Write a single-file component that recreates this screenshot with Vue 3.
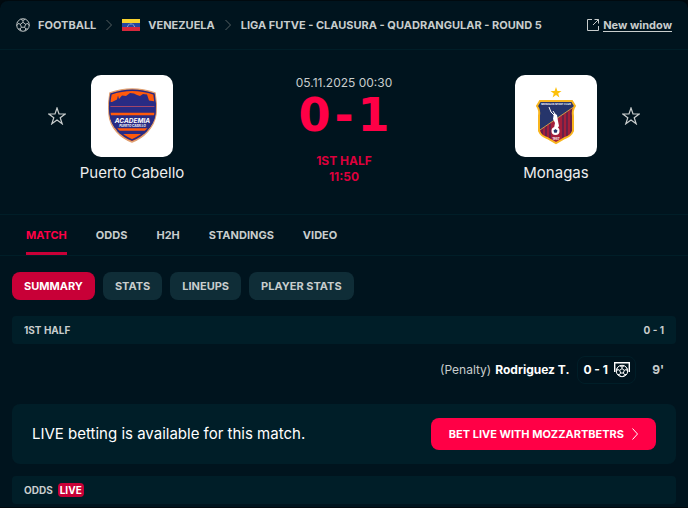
<template>
  <main class="page">
    <header class="header">
      <nav class="breadcrumb" aria-label="Breadcrumb">
        <a href="#" class="crumb">
          <svg class="ball" viewBox="0 0 20 20" aria-hidden="true">
            <circle cx="10" cy="10" r="9" />
            <path d="M10 6.2 13.7 8.9 12.3 13.2H7.7L6.3 8.9Z" />
            <path d="M10 6.2V3.4M13.7 8.9l2.8-1M12.3 13.2l1.7 2.4M7.7 13.2 6 15.6M6.3 8.9l-2.8-1" />
            <path d="M6.6 1.8 10 3.4l3.4-1.6M18 6.3l-1.5 1.6 2.4 3M16.8 15.8l-2.8-.2-1.5 3M7.5 18.6 6 15.6l-2.8.2M1.1 10.9l2.4-3L2 6.3" />
          </svg>
          FOOTBALL
        </a>
        <svg class="chevron" viewBox="0 0 6 12" aria-hidden="true"><path d="M.5 1 5.5 6 .5 11" /></svg>
        <a href="#" class="crumb">
          <svg class="flag" viewBox="0 0 18 12" aria-hidden="true">
            <rect width="18" height="4" fill="#f8d22e" />
            <rect y="4" width="18" height="4" fill="#2546a0" />
            <rect y="8" width="18" height="4" fill="#d6283c" />
            <path d="M5.5 7.8C6.2 4 11.8 4 12.5 7.8" fill="none" stroke="#b9c3df" stroke-width="1" stroke-dasharray="1.2 .5" />
          </svg>
          VENEZUELA
        </a>
        <svg class="chevron" viewBox="0 0 6 12" aria-hidden="true"><path d="M.5 1 5.5 6 .5 11" /></svg>
        <a href="#" class="crumb">LIGA FUTVE - CLAUSURA - QUADRANGULAR - ROUND 5</a>
      </nav>
      <a href="#" class="new-window">
        <svg viewBox="0 0 12 12" aria-hidden="true">
          <path d="M5 .5H.5v11h11V7M7.5.5h4v4M11.5.5 6 6" />
        </svg>
        <span>New window</span>
      </a>
    </header>

    <section class="duel">
      <div class="participant">
        <button class="favourite" aria-label="Add Puerto Cabello to favourites">
          <svg viewBox="0 0 18 18"><path :d="star" /></svg>
        </button>
        <a href="#" class="team">
          <span class="logo">
            <svg viewBox="0 0 82 82" aria-hidden="true">
              <defs>
                <clipPath id="shield"><path d="M19 18Q41 10 64 18Q66 29 65 39C63 53 52 63 41 67C30 63 19 53 18 39Q17 28 19 18Z" /></clipPath>
              </defs>
              <g clip-path="url(#shield)">
                <rect width="82" height="82" fill="#292b84" />
                <path d="M16 10H68V27L58 25.500 56 19.500 52 19 49 21 46 20 43 18.500 39 18 35 21 31 20.500 28 24 27 20.500 26 24.500 21 27H16Z" fill="#ff5a0b" />
                <path d="M16 31.500H68" stroke="#a2466a" />
                <path d="M16 39H68M16 54.500H68" stroke="#ff5a0b" stroke-width="2.500" />
                <path d="M16 59H68V70H16Z" fill="#ff5a0b" />
              </g>
              <path d="M19 18Q41 10 64 18Q66 29 65 39C63 53 52 63 41 67C30 63 19 53 18 39Q17 28 19 18Z" fill="none" stroke="#e1a071" stroke-width="1.500" />
              <path d="M20 19Q41 11.500 63 19Q65 29 64 39C62 52 51 61 41 65C31 61 21 52 19 39Q18 28 20 19Z" fill="none" stroke="#292b84" stroke-width="1.500" />
              <text x="41.500" y="47.500" font-size="6.500" font-style="italic" font-weight="700" text-anchor="middle" fill="#fff">ACADEMIA</text>
              <text x="41.500" y="51.500" font-size="3" font-style="italic" font-weight="700" text-anchor="middle" fill="#fff">PUERTO CABELLO</text>
            </svg>
          </span>
          <span class="team-name">Puerto Cabello</span>
        </a>
      </div>

      <div class="result">
        <time class="start-time">05.11.2025 00:30</time>
        <div class="score"><span>0</span><span>-</span><span>1</span></div>
        <div class="status">1ST HALF<br />11:50</div>
      </div>

      <div class="participant away">
        <button class="favourite" aria-label="Add Monagas to favourites">
          <svg viewBox="0 0 18 18"><path :d="star" /></svg>
        </button>
        <a href="#" class="team">
          <span class="logo">
            <svg viewBox="0 0 82 82" aria-hidden="true">
              <defs>
                <clipPath id="crest"><path d="M25 26H57L60 31Q57 35 58 41V56Q56 61 50 63L41 68 32 63Q26 61 24 56V41Q25 35 22 31Z" /></clipPath>
              </defs>
              <path d="m41 12 1.400 3.900h4.100L43.200 18.400l1.200 4L41 20l-3.400 2.400 1.200-4L35.500 15.900h4.100Z" fill="#fdc10d" />
              <g clip-path="url(#crest)">
                <rect width="82" height="82" fill="#26356b" />
                <path d="M60 31V70H22V57Z" fill="#a51f3b" />
                <path d="M27 54V70M31 51V70M35 48V70M48 40V70M52 37V70M56 34V70" stroke="#55244e" stroke-width="1.500" />
                <path d="M22 57 60 31" stroke="#c59a4d" />
              </g>
              <path d="M25 26H57L60 31Q57 35 58 41V56Q56 61 50 63L41 68 32 63Q26 61 24 56V41Q25 35 22 31Z" fill="none" stroke="#f8b51e" stroke-width="2" />
              <path d="M34 32 36 37 40 41M38 36l2 3" fill="none" stroke="#fff" />
              <path d="m39 38 3 2 1 6 1 5-2 3-3-1 1-5-2-4Z" fill="#fff" />
              <circle cx="40.500" cy="56" r="4" fill="#fff" />
              <path d="m40.500 54 2 1.500-.8 2.300h-2.400l-.8-2.300Z" fill="#26356b" />
              <text x="41" y="30" font-size="2.500" font-weight="700" text-anchor="middle" fill="#fff">MONAGAS SPORT CLUB</text>
              <text x="41" y="64.500" font-size="3" font-weight="700" text-anchor="middle" fill="#fff">1987</text>
            </svg>
          </span>
          <span class="team-name">Monagas</span>
        </a>
      </div>
    </section>

    <nav class="tabs" aria-label="Match sections">
      <a v-for="tab in tabs" :key="tab" href="#" :class="{ active: tab === activeTab }" @click.prevent="activeTab = tab">{{ tab }}</a>
    </nav>

    <div class="filters">
      <button v-for="item in filters" :key="item" :class="{ active: item === activeFilter }" @click="activeFilter = item">{{ item }}</button>
    </div>

    <div class="content">
      <div class="section-bar">
        <span>1ST HALF</span>
        <span>0 - 1</span>
      </div>

      <div class="incident">
        <span class="note">(Penalty)</span>
        <a href="#" class="player">Rodriguez T.</a>
        <div class="incident-score">
          <span>0 - 1</span>
          <svg viewBox="0 0 16 16" aria-hidden="true">
            <path d="M.7 10V.7H15.300V10" stroke-width="1.400" />
            <circle cx="8" cy="9" r="5.700" />
            <path d="M8 6.600 10.300 8.300 9.400 11H6.600L5.700 8.300ZM8 6.600V5M10.300 8.300l2-.8M9.400 11l1.200 1.600M6.600 11l-1.200 1.600M5.700 8.300l-2-.8M5.800 3.800 8 5l2.200-1.200M13 6.300l-.7 1.200 1.300 2M12.500 12.600h-1.900l-1 1.800M6.400 14.400l-1-1.800H3.500M2.400 9.500l1.300-2L3 6.300" />
          </svg>
        </div>
        <span class="minute">9'</span>
      </div>

      <div class="betting">
        <p>LIVE betting is available for this match.</p>
        <button class="bet-button">
          BET LIVE WITH MOZZARTBETRS
          <svg viewBox="0 0 6 12" aria-hidden="true"><path d="M.5 .5 5.500 6 .5 11.500" /></svg>
        </button>
      </div>

      <div class="section-bar odds">
        <span>ODDS</span>
        <span class="live">LIVE</span>
      </div>
    </div>
  </main>
</template>

<script setup>
import { ref } from 'vue';

const tabs = ['MATCH', 'ODDS', 'H2H', 'STANDINGS', 'VIDEO'];
const filters = ['SUMMARY', 'STATS', 'LINEUPS', 'PLAYER STATS'];
const activeTab = ref('MATCH');
const activeFilter = ref('SUMMARY');

const star = 'M9 1 11 7H17.200L12.200 10.700 14.200 16.800 9 13 3.800 16.800 5.800 10.700 .8 7H7Z';
</script>

<style>
body {
  margin: 0;
  background: #010a0f;
}
</style>

<style scoped>
* {
  box-sizing: border-box;
}

.page {
  background: #00141e;
  border-radius: 8px 8px 0 0;
  border-top: 1px solid #010a0f;
  padding-bottom: 3px;
  color: #c8cdcd;
  font-family: Inter, "Liberation Sans", sans-serif;
  font-size: 12px;
  line-height: 16px;
}

a {
  color: inherit;
  text-decoration: none;
}

button {
  border: none;
  background: none;
  padding: 0;
  color: inherit;
  font: inherit;
  cursor: pointer;
}

svg {
  display: block;
  flex: none;
}

.header {
  display: flex;
  align-items: center;
  justify-content: space-between;
  height: 49px;
  padding: 0 16px;
  border-bottom: 1px solid #001e28;
}

.breadcrumb {
  display: flex;
  align-items: center;
  gap: 10px;
  font-size: 11px;
  font-weight: 700;
  white-space: nowrap;
}

.crumb {
  display: flex;
  align-items: center;
  gap: 8px;
}

.ball {
  width: 14px;
  height: 14px;
  fill: none;
  stroke: currentColor;
  stroke-width: 1.3;
}

.flag {
  width: 18px;
  height: 12px;
}

.chevron {
  width: 6px;
  height: 12px;
  fill: none;
  stroke: #555e61;
}

.new-window {
  display: flex;
  align-items: center;
  gap: 4px;
  font-size: 11px;
  font-weight: 700;
}

.new-window span {
  border-bottom: 1px solid currentColor;
  line-height: 12px;
}

.new-window svg {
  width: 12px;
  height: 12px;
  fill: none;
  stroke: currentColor;
}

.duel {
  display: flex;
  justify-content: space-between;
  padding: 25px 48px 29px;
  border-bottom: 1px solid #001e28;
}

.participant {
  display: flex;
  align-items: flex-start;
  gap: 14px;
}

.away {
  flex-direction: row-reverse;
}

.favourite {
  margin-top: 32px;
}

.favourite svg {
  width: 18px;
  height: 18px;
  fill: none;
  stroke: #c8cdcd;
  stroke-width: 1.2;
}

.team {
  display: flex;
  flex-direction: column;
  align-items: center;
  gap: 4px;
  width: 104px;
}

.logo {
  overflow: hidden;
  width: 82px;
  height: 82px;
  border-radius: 10px;
  background: #fff;
}

.team-name {
  color: #eeeeee;
  font-size: 15px;
  line-height: 24px;
  white-space: nowrap;
}

.result {
  text-align: center;
  color: #ff0046;
}

.start-time {
  display: block;
  color: #c8cdcd;
}

.score {
  display: flex;
  justify-content: center;
  gap: 4px;
  font-family: "DejaVu Sans", sans-serif;
  font-size: 46px;
  font-weight: 700;
  line-height: 48px;
}

.status {
  margin-top: 14px;
  color: #dc003c;
  font-weight: 700;
}

.tabs {
  display: flex;
  gap: 29px;
  height: 41px;
  padding: 0 26px;
  border-bottom: 1px solid #001e28;
  font-size: 11px;
  font-weight: 700;
}

.tabs a {
  padding-top: 12px;
}

.tabs .active {
  border-bottom: 3px solid #c80037;
  border-radius: 2px 2px 0 0;
  color: #ff0046;
}

.filters {
  display: flex;
  gap: 8px;
  padding: 16px 12px;
}

.filters button {
  height: 28px;
  padding: 0 12px;
  border-radius: 8px;
  background: #0f2d37;
  font-size: 11px;
  font-weight: 700;
}

.filters .active {
  background: #c80037;
  color: #fff;
}

.content {
  padding: 0 12px;
}

.section-bar {
  display: flex;
  align-items: center;
  justify-content: space-between;
  height: 28px;
  padding: 0 12px;
  border-radius: 4px;
  background: #001e28;
  font-size: 10px;
  font-weight: 700;
}

.incident {
  display: flex;
  align-items: center;
  justify-content: flex-end;
  padding: 12px;
}

.player {
  margin: 0 8px 0 4px;
  color: #fff;
  font-weight: 700;
}

.incident-score {
  display: flex;
  align-items: center;
  gap: 6px;
  height: 28px;
  padding: 0 5px;
  border: 1px solid #001e28;
  border-radius: 8px;
  color: #fff;
  font-weight: 700;
}

.incident-score svg {
  width: 16px;
  height: 16px;
  fill: none;
  stroke: currentColor;
}

.minute {
  width: 28px;
  text-align: right;
  font-weight: 700;
}

.betting {
  display: flex;
  align-items: center;
  justify-content: space-between;
  margin: 8px 0 12px;
  padding: 14px 20px;
  border-radius: 8px;
  background: #001e28;
}

.betting p {
  margin: 0;
  color: #fff;
  font-size: 15px;
}

.bet-button {
  display: flex;
  align-items: center;
  gap: 8px;
  height: 32px;
  padding: 0 18px;
  border-radius: 8px;
  background: #ff0046;
  color: #fff;
  font-size: 11px;
  font-weight: 700;
}

.bet-button svg {
  width: 6px;
  height: 12px;
  fill: none;
  stroke: currentColor;
}

.odds {
  justify-content: flex-start;
  gap: 5px;
}

.live {
  padding: 0 2px;
  border-radius: 4px;
  background: #c80037;
  color: #fff;
  line-height: 14px;
}
</style>
